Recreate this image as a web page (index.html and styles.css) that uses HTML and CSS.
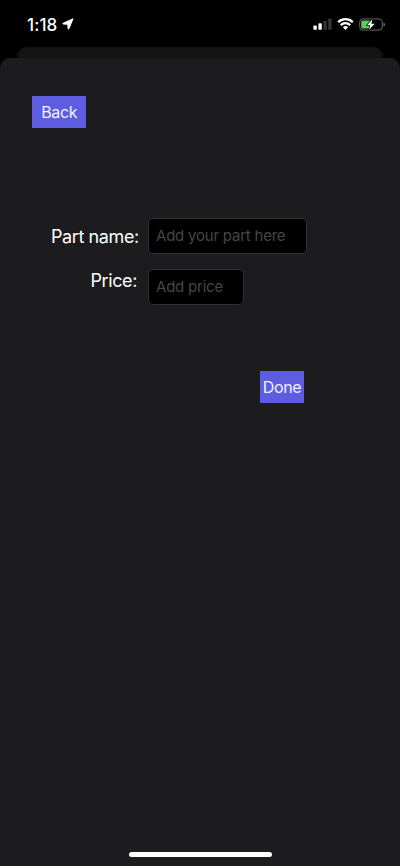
FILE: index.html
```html
<!DOCTYPE html>
<html lang="en">
<head>
<meta charset="utf-8">
<meta name="viewport" content="width=device-width, initial-scale=1">
<title>Add part</title>
<link rel="stylesheet" href="styles.css">
</head>
<body>
<div class="screen">
  <header class="status">
    <span class="time">1:18</span>
    <svg class="location" width="12" height="12" viewBox="0 0 12 12"><path d="M11 .8 6.9 10.7Q6.4 11.6 6.1 10.6L5.8 6.2 1.2 6Q.2 5.7 1.2 5.2Z" fill="#fff" stroke="#fff" stroke-width="1" stroke-linejoin="round"/></svg>
    <div class="indicators">
      <svg width="19" height="12" viewBox="0 0 19 12"><rect x=".4" y="7.6" width="3.4" height="4.2" rx=".8" fill="#fff"/><rect x="5.4" y="5.3" width="3.4" height="6.5" rx=".8" fill="#fff"/><rect x="10.4" y="2.8" width="3.4" height="9" rx=".8" fill="#343434"/><rect x="15.2" y=".4" width="3.4" height="11.4" rx=".8" fill="#343434"/></svg>
      <svg width="17" height="12" viewBox="0 0 17 12" fill="none" stroke="#fff" stroke-width="2.3"><path d="M1.2 4.2a10.4 10.4 0 0 1 14.6 0"/><path d="M3.8 7.1a6.6 6.6 0 0 1 9.4 0"/><path d="M5.9 9.3a3.6 3.6 0 0 1 5.2 0L8.5 11.9Z" fill="#fff" stroke="none"/></svg>
      <svg width="27" height="13" viewBox="0 0 27 13"><rect x=".7" y=".9" width="22.6" height="11.2" rx="3.3" fill="none" stroke="#686868" stroke-width="1"/><path d="M24.5 4.5q1.6.5 1.6 2t-1.6 2z" fill="#686868"/><rect x="2.2" y="2.4" width="9.8" height="8.2" rx="1.6" fill="#5bcb61"/><path d="M13.6.9 8 7.2h3.3l-1.3 4.9 5.6-6.4h-3.3z" fill="#fff" stroke="#000" stroke-width="1.4" paint-order="stroke" stroke-linejoin="round"/></svg>
    </div>
  </header>
  <div class="previous"></div>
  <main class="sheet">
    <button class="btn back">Back</button>
    <form class="form">
      <label class="label name-label" for="name">Part name:</label>
      <input class="field" id="name" placeholder="Add your part here">
      <label class="label price-label" for="price">Price:</label>
      <input class="field price" id="price" placeholder="Add price">
    </form>
    <button class="btn done">Done</button>
    <div class="home"></div>
  </main>
</div>
</body>
</html>
```
FILE: styles.css
```css
* { box-sizing: border-box; }
body { margin: 0; background: #000; color: #fff; font-family: Inter, "Liberation Sans", sans-serif; }
.screen { width: 400px; height: 866px; display: flex; flex-direction: column; overflow: hidden; }
.status { height: 47px; flex: none; display: flex; align-items: flex-start; padding: 14px 14px 0 27px; }
.time { width: 32px; font-size: 17px; line-height: 22px; font-weight: 550; letter-spacing: .1px; white-space: nowrap; }
.location { margin: 4px 0 0 3px; }
.indicators { margin: 4px 0 0 auto; display: flex; gap: 5px; }
.previous { height: 21px; flex: none; margin: 0 17px -10px; background: #131314; border-radius: 10px 10px 0 0; }
.sheet { flex: 1; display: flex; flex-direction: column; align-items: flex-start; padding: 38px 32px 9px; background: #1c1c1e; border-radius: 10px 10px 0 0; }
.btn { height: 32px; padding: 0; border: 0; border-radius: 0; background: #5e5ce0; color: #f4f2ff; font: 400 16px/32px Inter, sans-serif; letter-spacing: -.4px; }
.back { width: 54.4px; }
.form { margin: 90px 0 0 19px; display: grid; grid-template-columns: 97px auto; row-gap: 15px; }
.label { font-size: 18px; line-height: 22px; letter-spacing: -.4px; white-space: nowrap; }
.name-label { margin-top: 8px; }
.price-label { margin-top: 1px; padding-left: 39.5px; }
.field { width: 159px; height: 36px; padding: 0 7px 2px; border: 1px solid #303032; border-radius: 5px; outline: 0; background: #000; color: #fff; font: 400 15px Inter, sans-serif; letter-spacing: -.22px; }
.field::placeholder { color: #464648; opacity: 1; }
.price { width: 96px; }
.done { width: 44px; margin: 66px 0 0 228px; }
.home { width: 143px; height: 5px; margin: auto auto 0; border-radius: 3px; background: #fff; }
```
